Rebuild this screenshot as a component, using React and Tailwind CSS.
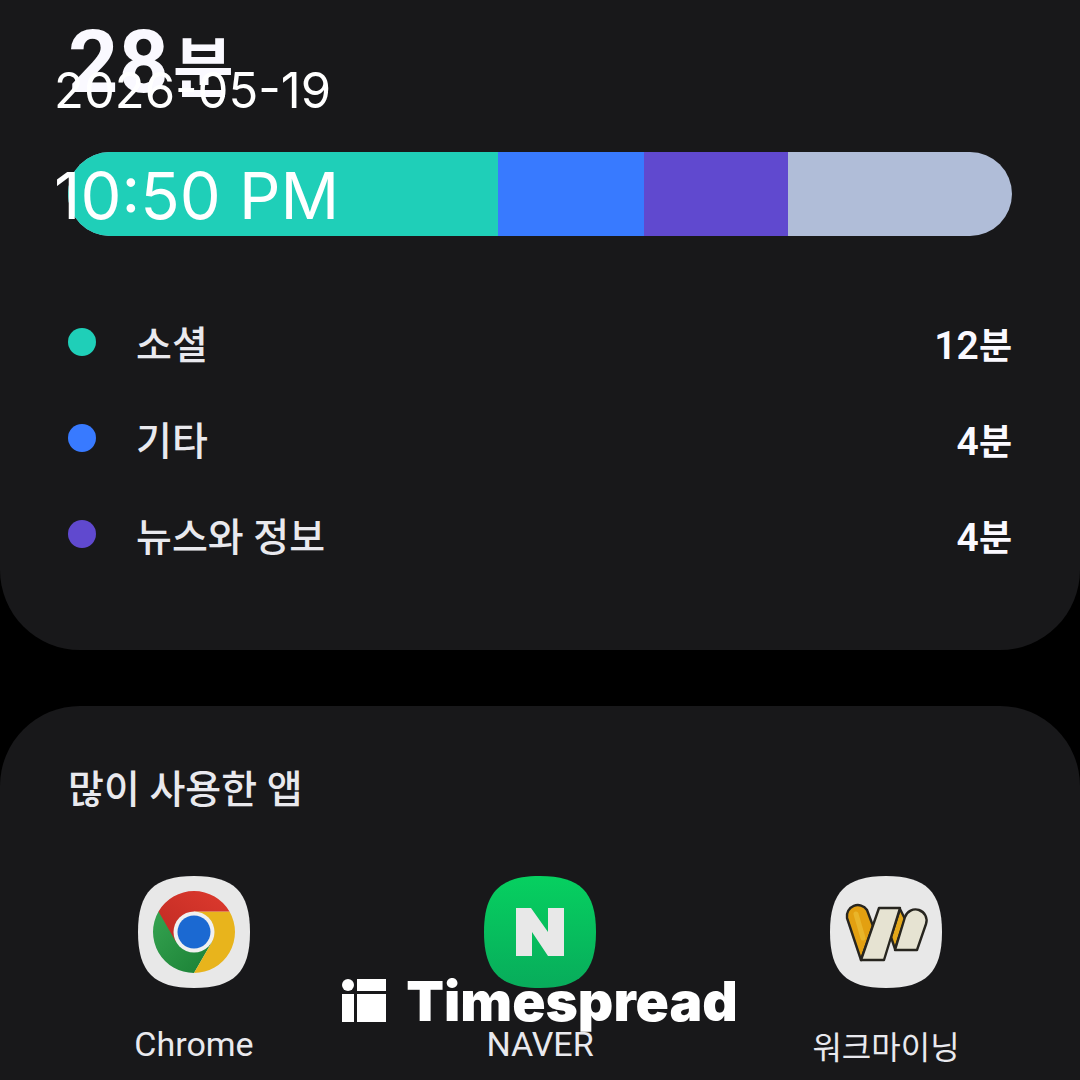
import React from "react";

const categories = [
  { id: "social", label: "소셜", minutes: 12, share: 430, color: "bg-[#1fcfb8]" },
  { id: "etc", label: "기타", minutes: 4, share: 146, color: "bg-[#387aff]" },
  { id: "news", label: "뉴스와 정보", minutes: 4, share: 144, color: "bg-[#6049cf]" },
];
const restShare = 224;

const SQUIRCLE =
  "M56 0C96 0 112 16 112 56C112 96 96 112 56 112C16 112 0 96 0 56C0 16 16 0 56 0Z";

const ChromeIcon = () => (
  <svg className="w-28 h-28" viewBox="0 0 112 112" aria-hidden="true">
    <defs>
      <linearGradient id="chromeRed" x1="0" y1="1" x2="1" y2="0">
        <stop offset="0" stopColor="#c02a23" />
        <stop offset="1" stopColor="#dd3a2e" />
      </linearGradient>
      <linearGradient id="chromeGreen" x1="0" y1="0" x2="1" y2="1">
        <stop offset="0" stopColor="#35a350" />
        <stop offset="1" stopColor="#1a8035" />
      </linearGradient>
    </defs>
    <path d={SQUIRCLE} fill="#e8e8e8" />
    <path d="M20.5 35.5A41 41 0 0 0 56 97L73.8 66.2L56 56Z" fill="url(#chromeGreen)" />
    <path d="M56 35.5H91.5A41 41 0 0 1 56 97L73.8 66.2Z" fill="#e8b41c" />
    <path d="M20.5 35.5A41 41 0 0 1 91.5 35.5H56V56L38.2 66.2Z" fill="url(#chromeRed)" />
    <circle cx="56" cy="56" r="20.5" fill="#f0f0f0" />
    <circle cx="56" cy="56" r="16.5" fill="#1b69d2" />
  </svg>
);

const NaverIcon = () => (
  <svg className="w-28 h-28" viewBox="0 0 112 112" aria-hidden="true">
    <defs>
      <linearGradient id="naverBg" x1="0" y1="0" x2="0" y2="1">
        <stop offset="0" stopColor="#06d060" />
        <stop offset="1" stopColor="#08ac5b" />
      </linearGradient>
    </defs>
    <path d={SQUIRCLE} fill="url(#naverBg)" />
    <path d="M32 32H47L64 56V32H80V80H64L48 56V80H32Z" fill="#e8e8e8" />
  </svg>
);

const WorkMiningIcon = () => (
  <svg className="w-28 h-28" viewBox="0 0 112 112" aria-hidden="true">
    <path d={SQUIRCLE} fill="#e8e8e8" />
    <g stroke="#27251f" strokeWidth="2.4" strokeLinejoin="round">
      <path d="M31 84L17 42A11 11 0 0 1 37 34L43 50Z" fill="#e3a011" />
      <path d="M70 33L75 43L65 73L61 61Z" fill="#e3a81b" />
      <path d="M49 32H70L54 84H31Z" fill="#e6e3d2" />
      <path d="M65 74L75 41A11 11 0 0 1 96 48L87 74Z" fill="#e6e3d2" />
    </g>
    <path d="M26 38L33 62" stroke="#e9b52a" strokeWidth="5" strokeLinecap="round" />
  </svg>
);

const apps = [
  { id: "chrome", name: "Chrome", Icon: ChromeIcon, text: "text-[34px] leading-[48px]" },
  { id: "naver", name: "NAVER", Icon: NaverIcon, text: "text-[34px] leading-[48px]" },
  { id: "workmining", name: "워크마이닝", Icon: WorkMiningIcon, text: "text-[32px] leading-[56px]" },
];

const Watermark = () => (
  <div className="absolute inset-x-0 bottom-[51px] flex items-center justify-center gap-5 text-white">
    <svg className="w-11 h-11" viewBox="0 0 44 44" fill="currentColor" aria-hidden="true">
      <circle cx="6" cy="6" r="6" />
      <rect x="15" width="29" height="12" />
      <rect y="15" width="12" height="28" />
      <rect x="15" y="15" width="29" height="28" />
    </svg>
    <span className="font-['Inter',sans-serif] text-[55px] leading-[56px] font-black">
      Timespread
    </span>
  </div>
);

const App = () => {
  return (
    <main className="relative flex flex-col gap-14 h-screen overflow-hidden bg-black text-[#e9e9ee] font-['Roboto','Noto_Sans_CJK_KR',sans-serif]">
      {/* Screen time */}
      <section className="shrink-0 rounded-b-[80px] bg-[#18181a] px-[68px] pt-[14px] pb-16">
        <h1 className="text-[88px] leading-[96px] font-bold text-[#faf9ff]">
          28<span className="ml-1 text-[66px] leading-none">분</span>
        </h1>

        <div className="mt-[42px] flex h-[84px] overflow-hidden rounded-full bg-[#b0bdd8]">
          {categories.map((item) => (
            <div key={item.id} className={item.color} style={{ flexGrow: item.share }} />
          ))}
          <div style={{ flexGrow: restShare }} />
        </div>

        <ul className="mt-[62px]">
          {categories.map((item) => (
            <li key={item.id} className="flex h-24 items-center">
              <span className={`mb-2 h-7 w-7 rounded-full ${item.color}`} />
              <span className="ml-10 text-[39px] leading-[48px] font-medium">{item.label}</span>
              <span className="ml-auto text-[39px] leading-[48px] font-semibold text-[#faf9ff]">
                {item.minutes}
                <span className="text-[36px]">분</span>
              </span>
            </li>
          ))}
        </ul>
      </section>

      {/* Most used apps */}
      <section className="flex-1 rounded-t-[80px] bg-[#18181a] pt-14">
        <h2 className="px-[68px] text-[39px] leading-[56px] font-medium">많이 사용한 앱</h2>
        <ul className="mt-[58px] grid grid-cols-3 px-[21px]">
          {apps.map(({ id, name, Icon, text }) => (
            <li key={id} className="flex flex-col items-center gap-8">
              <Icon />
              <span className={text}>{name}</span>
            </li>
          ))}
        </ul>
      </section>

      {/* Capture time */}
      <div className="absolute left-[54px] top-[61px] flex flex-col gap-[45px] text-white font-['Inter',sans-serif]">
        <time className="text-[49px] leading-[60px]">2026-05-19</time>
        <time className="text-[65px] leading-[60px]">10:50 PM</time>
      </div>

      <Watermark />
    </main>
  );
};

export default App;
